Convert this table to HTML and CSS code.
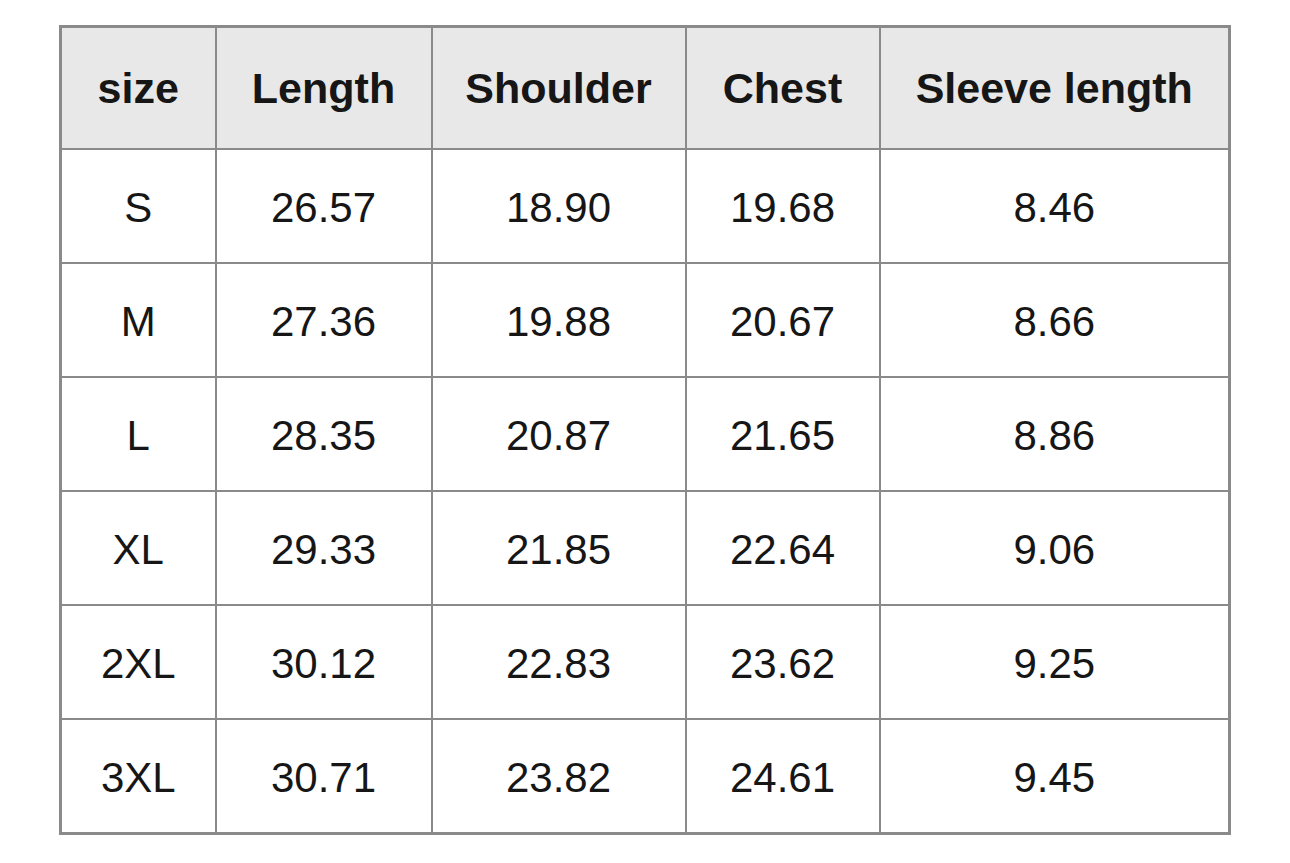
FILE: index.html
```html
<!DOCTYPE html>
<html>
<head>
<meta charset="utf-8">
<link rel="stylesheet" href="styles.css">
</head>
<body>
<div class="page">
<table class="sizes">
<colgroup>
<col class="c1"><col class="c2"><col class="c3"><col class="c4"><col class="c5">
</colgroup>
<thead>
<tr><th>size</th><th>Length</th><th>Shoulder</th><th>Chest</th><th>Sleeve length</th></tr>
</thead>
<tbody>
<tr><td>S</td><td>26.57</td><td>18.90</td><td>19.68</td><td>8.46</td></tr>
<tr><td>M</td><td>27.36</td><td>19.88</td><td>20.67</td><td>8.66</td></tr>
<tr><td>L</td><td>28.35</td><td>20.87</td><td>21.65</td><td>8.86</td></tr>
<tr><td>XL</td><td>29.33</td><td>21.85</td><td>22.64</td><td>9.06</td></tr>
<tr><td>2XL</td><td>30.12</td><td>22.83</td><td>23.62</td><td>9.25</td></tr>
<tr><td>3XL</td><td>30.71</td><td>23.82</td><td>24.61</td><td>9.45</td></tr>
</tbody>
</table>
</div>
</body>
</html>
```
FILE: styles.css
```css
html, body {
  margin: 0;
  padding: 0;
  background: #ffffff;
}
.page {
  padding: 25px 0 0 59px;
}
.sizes {
  border-collapse: collapse;
  table-layout: fixed;
  width: 1171px;
  font-family: "Liberation Sans", Arial, sans-serif;
  color: #161616;
  border: 3px solid #8a8a8a;
}
.c1 { width: 155px; }
.c2 { width: 216px; }
.c3 { width: 254px; }
.c4 { width: 194px; }
.c5 { width: 350px; }
.sizes th, .sizes td {
  border: 2px solid #8a8a8a;
  text-align: center;
  vertical-align: middle;
  padding: 0;
}
.sizes th {
  background: #e8e8e8;
  height: 120px;
  font-size: 43px;
  font-weight: bold;
  letter-spacing: 0;
}
.sizes td {
  height: 108px;
  padding-top: 4px;
  font-size: 42px;
  font-weight: normal;
  letter-spacing: 0;
}
```
